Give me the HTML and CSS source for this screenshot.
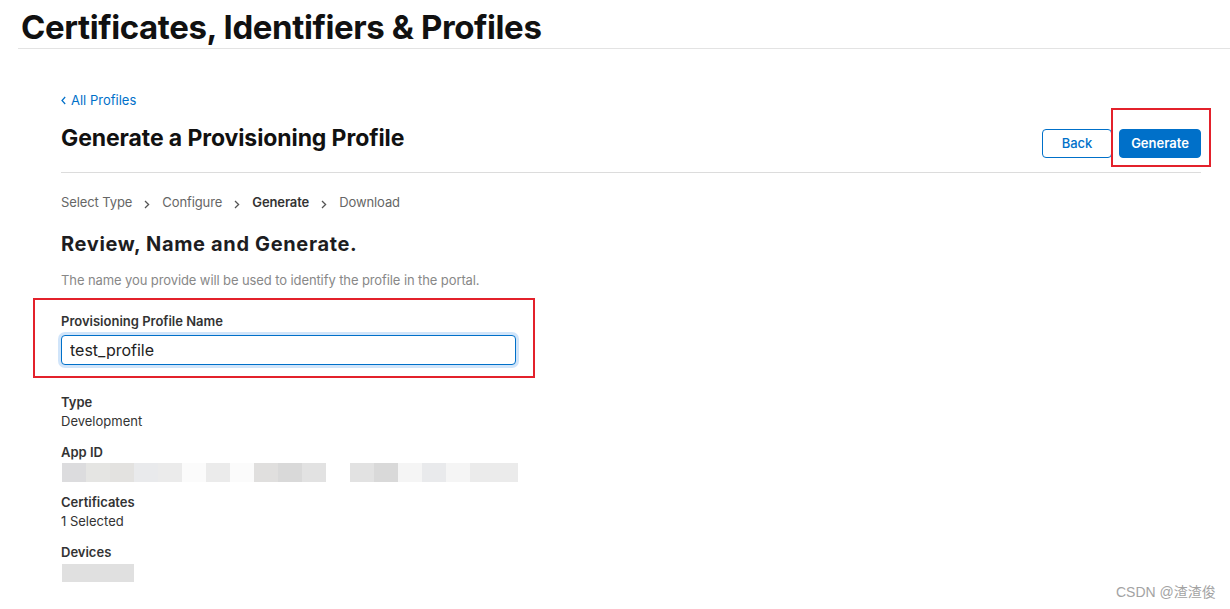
FILE: index.html
```html
<!DOCTYPE html>
<html lang="en">
<head>
<meta charset="utf-8">
<title>Certificates, Identifiers &amp; Profiles</title>
<link rel="stylesheet" href="styles.css">
</head>
<body>
<header class="top">
  <h1 class="top-title">Certificates, Identifiers &amp; Profiles</h1>
</header>
<main class="content">
  <a class="back-link" href="#"><svg class="back-chev" width="5" height="9" viewBox="0 0 5 9"><path d="M4.2 1 L1 4.5 L4.2 8" fill="none" stroke="currentColor" stroke-width="1.2"/></svg>All Profiles</a>
  <div class="page-head">
    <h2 class="page-title">Generate a Provisioning Profile</h2>
    <div class="actions">
      <button class="btn btn-secondary">Back</button>
      <span class="highlight-wrap highlight-btn"><button class="btn btn-primary">Generate</button></span>
    </div>
  </div>
  <nav class="steps">
    <span class="step">Select Type</span>
    <svg class="chev" width="6" height="9" viewBox="0 0 6 9"><path d="M1 1 L4.6 4.5 L1 8" fill="none" stroke="currentColor" stroke-width="1.3"/></svg>
    <span class="step">Configure</span>
    <svg class="chev" width="6" height="9" viewBox="0 0 6 9"><path d="M1 1 L4.6 4.5 L1 8" fill="none" stroke="currentColor" stroke-width="1.3"/></svg>
    <span class="step step-current">Generate</span>
    <svg class="chev" width="6" height="9" viewBox="0 0 6 9"><path d="M1 1 L4.6 4.5 L1 8" fill="none" stroke="currentColor" stroke-width="1.3"/></svg>
    <span class="step">Download</span>
  </nav>
  <h3 class="section-title">Review, Name and Generate.</h3>
  <p class="desc">The name you provide will be used to identify the profile in the portal.</p>
  <div class="field highlight-wrap highlight-field">
    <label class="field-label" for="pname">Provisioning Profile Name</label>
    <input class="field-input" id="pname" type="text" value="test_profile">
  </div>
  <dl class="summary">
    <div class="item">
      <dt class="item-label">Type</dt>
      <dd class="item-value">Development</dd>
    </div>
    <div class="item">
      <dt class="item-label">App ID</dt>
      <dd class="item-value mosaic">
        <span class="m m1"></span><span class="m m2"></span><span class="m m3"></span><span class="m m4"></span><span class="m m5"></span><span class="m m6"></span><span class="m m5"></span><span class="m m6"></span><span class="m m7"></span><span class="m m8"></span><span class="m m9"></span><span class="m m0"></span><span class="m m9"></span><span class="m m8"></span><span class="m m10"></span><span class="m m4"></span><span class="m m10"></span><span class="m m5"></span><span class="m m5"></span>
      </dd>
    </div>
    <div class="item">
      <dt class="item-label">Certificates</dt>
      <dd class="item-value">1 Selected</dd>
    </div>
    <div class="item">
      <dt class="item-label">Devices</dt>
      <dd class="item-value"><span class="device-block"></span></dd>
    </div>
  </dl>
</main>
<div class="watermark">CSDN @渣渣俊</div>
</body>
</html>
```
FILE: styles.css
```css
* { box-sizing: border-box; }
html, body { margin: 0; padding: 0; background: #fff; }
body {
  font-family: Inter, "Noto Sans", "Liberation Sans", sans-serif;
  color: #333;
  width: 1230px;
  height: 609px;
  overflow: hidden;
  position: relative;
}
.top {
  margin-left: 18px;
  border-bottom: 1px solid #e3e3e3;
  padding: 6px 0 0 3px;
  height: 49px;
}
.top-title {
  margin: 0;
  font-size: 33px;
  line-height: 42px;
  font-weight: 700;
  letter-spacing: -0.4px;
  color: #111;
}
.content {
  width: 1140px;
  margin-left: 61px;
  padding-top: 42px;
  display: flex;
  flex-direction: column;
  align-items: flex-start;
}
.back-link {
  display: flex;
  align-items: center;
  gap: 5px;
  font-size: 13px;
  line-height: 18px;
  color: #0070c9;
  text-decoration: none;
}
.back-chev { margin-top: 1px; }
.page-head {
  align-self: stretch;
  display: flex;
  justify-content: space-between;
  align-items: flex-end;
  margin-top: 13px;
  padding-bottom: 14px;
  border-bottom: 1px solid #dcdcdc;
}
.page-title {
  margin: 0 0 4px 0;
  font-size: 23px;
  line-height: 32px;
  font-weight: 700;
  color: #111;
  letter-spacing: -0.1px;
}
.actions {
  display: flex;
  gap: 7px;
}
.btn {
  height: 29px;
  border-radius: 4px;
  font-family: inherit;
  font-size: 13px;
  font-weight: 600;
  padding: 0 0 1px 0;
  cursor: pointer;
}
.btn-secondary {
  width: 70px;
  background: #fff;
  color: #0070c9;
  border: 1px solid #0070c9;
  font-weight: 500;
}
.btn-primary {
  width: 82px;
  background: #0070c9;
  color: #fff;
  border: 1px solid #0070c9;
  display: block;
}
.highlight-wrap { position: relative; display: block; }
.highlight-wrap::after {
  content: "";
  position: absolute;
  border: 2px solid #e3212b;
  pointer-events: none;
}
.highlight-btn::after { left: -8px; right: -10px; top: -21px; bottom: -9px; }
.steps {
  margin-top: 20px;
  display: flex;
  align-items: center;
  font-size: 13px;
  line-height: 18px;
  color: #666;
  letter-spacing: -0.1px;
}
.chev { color: #555; margin: 4px 12px 0 12px; }
.step-current { font-weight: 600; color: #333; }
.section-title {
  margin: 20px 0 0 0;
  font-size: 20px;
  line-height: 26px;
  font-weight: 700;
  letter-spacing: 0.65px;
  color: #1d1d1f;
}
.desc {
  margin: 14px 0 0 0;
  font-size: 13px;
  line-height: 18px;
  color: #888;
  letter-spacing: -0.1px;
}
.field {
  margin-top: 23px;
  width: 455px;
  display: flex;
  flex-direction: column;
}
.highlight-field::after { left: -28px; right: -19px; top: -14px; bottom: -13px; }
.field-label {
  font-size: 13px;
  line-height: 18px;
  font-weight: 600;
  color: #333;
}
.field-input {
  margin-top: 5px;
  height: 30px;
  width: 455px;
  border: 1px solid #0070c9;
  border-radius: 4px;
  box-shadow: 0 0 0 3px rgba(0, 113, 227, 0.18);
  padding: 0 8px;
  font-family: inherit;
  font-size: 16px;
  color: #222;
  outline: none;
}
.summary {
  margin: 28px 0 0 0;
  display: flex;
  flex-direction: column;
  gap: 12px;
}
.item { display: flex; flex-direction: column; }
.item-label {
  font-size: 13px;
  line-height: 19px;
  font-weight: 600;
  color: #333;
}
.item-value {
  margin: 0;
  font-size: 13px;
  line-height: 19px;
  color: #333;
}
.mosaic {
  display: flex;
  margin: 1px 0 -1px 1px;
  height: 19px;
}
.m { width: 24px; height: 19px; display: block; }
.m0 { background: #fff; }
.m1 { background: #dcdcde; }
.m2 { background: #e5e5e3; }
.m3 { background: #e3e2e0; }
.m4 { background: #e9eaec; }
.m5 { background: #ebebeb; }
.m6 { background: #fbfbfb; }
.m7 { background: #e0dfde; }
.m8 { background: #d9d9d9; }
.m9 { background: #e2e2e2; }
.m10 { background: #f5f5f5; }
.device-block {
  display: block;
  width: 72px;
  height: 18px;
  margin: 2px 0 0 1px;
  background: #e0e0e0;
}
.watermark {
  position: absolute;
  left: 1116px;
  top: 583px;
  font-family: "Liberation Sans", "Noto Sans CJK SC", sans-serif;
  font-size: 14px;
  line-height: 18px;
  color: #a3a3a3;
}
```
